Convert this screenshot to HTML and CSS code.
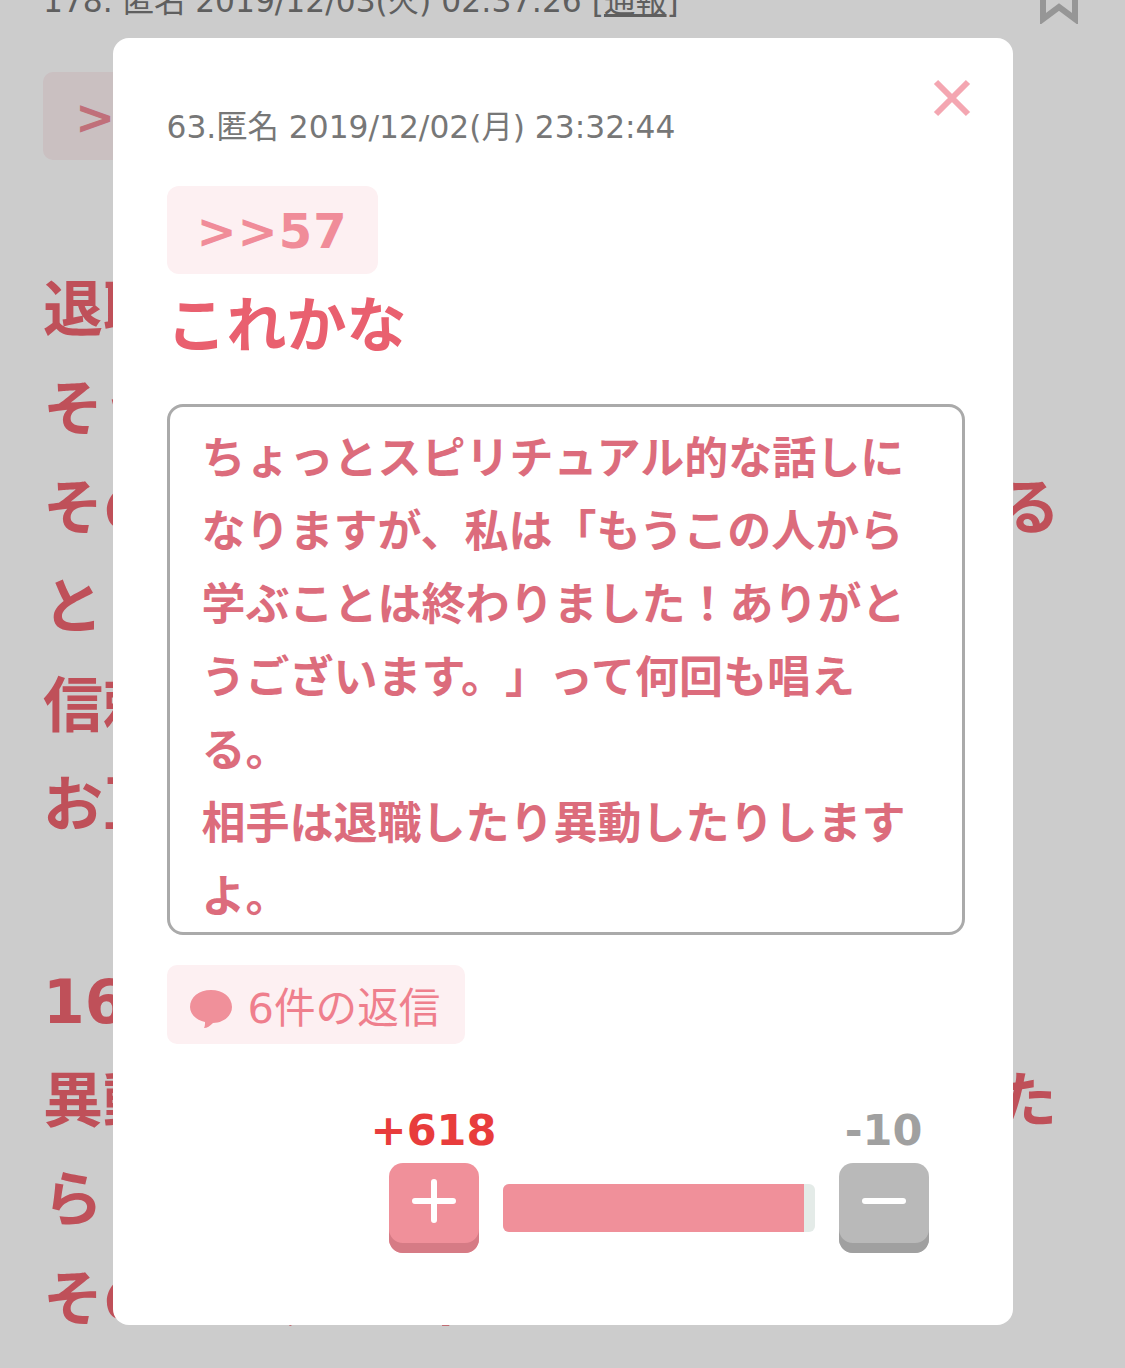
FILE: index.html
```html
<!DOCTYPE html>
<html lang="ja">
<head>
    <meta charset="UTF-8">
    <meta name="viewport" content="width=device-width, initial-scale=1.0">
    <title>コメント</title>
    <link rel="stylesheet" href="styles.css">
</head>
<body>

<div class="thread">
    <div class="thread-meta">
        <span>178. 匿名 2019/12/03(火) 02:37:26 [<u>通報</u>]</span>
        <svg class="bookmark" viewBox="0 0 38 28" width="38" height="28">
            <path d="M3 -6V23L19 11L35 23V-6" fill="none" stroke="#bcbcbc" stroke-width="6"/>
        </svg>
    </div>
    <div class="thread-quote">&gt;&gt;63</div>
    <div class="thread-body">
        <p>退職する人に対しては</p>
        <p>そういう気持ちになります</p>
        <p>その人のことは考えないようにしてる</p>
        <p>と</p>
        <p>信頼できる人に話します</p>
        <p>お互いに</p>
        <p>&nbsp;</p>
        <p>164.</p>
        <p>異動するまでの辛抱だと思ってました</p>
        <p>ら</p>
        <p>その人が先に辞めました</p>
    </div>
</div>

<div class="overlay">
    <div class="modal">
        <svg class="modal-close" viewBox="0 0 38 38" width="38" height="38">
            <path d="M3 3L35 35M35 3L3 35" stroke="#f4a6b1" stroke-width="6" fill="none"/>
        </svg>
        <div class="modal-meta">63.匿名 2019/12/02(月) 23:32:44</div>
        <div class="anchor">&gt;&gt;57</div>
        <div class="comment">これかな</div>
        <div class="quote-box">ちょっとスピリチュアル的な話しになりますが、私は「もうこの人から学ぶことは終わりました！ありがとうございます。」って何回も唱える。<br>相手は退職したり異動したりしますよ。</div>
        <div class="reply-chip">
            <svg class="bubble" viewBox="0 0 42 38" width="42" height="38">
                <path d="M21 0C33 0 42 7 42 17C42 26 33 33 23 33C20 36 17 38 14 38C15 36 15 34 15 32C6 30 0 24 0 17C0 7 9 0 21 0Z" fill="#f0909a"/>
            </svg>
            <span>6件の返信</span>
        </div>
        <div class="vote">
            <div class="vote-side">
                <div class="vote-count vote-count-plus">+618</div>
                <div class="vote-btn vote-btn-plus">
                    <svg viewBox="0 0 46 46" width="46" height="46">
                        <path d="M23 4V42M4 23H42" stroke="#fff" stroke-width="6" stroke-linecap="round"/>
                    </svg>
                </div>
            </div>
            <div class="vote-bar"><div class="vote-fill" style="width: 96.5%"></div></div>
            <div class="vote-side">
                <div class="vote-count vote-count-minus">-10</div>
                <div class="vote-btn vote-btn-minus">
                    <svg viewBox="0 0 46 46" width="46" height="46">
                        <path d="M4 23H42" stroke="#fff" stroke-width="6" stroke-linecap="round"/>
                    </svg>
                </div>
            </div>
        </div>
    </div>
</div>

</body>
</html>
```

FILE: styles.css
```css
html, body {
    margin: 0;
    height: 1368px;
    overflow: hidden;
    background-color: #fff;
}
body {
    font-family: "DejaVu Sans", "Noto Sans CJK JP", sans-serif;
}
.thread {
    padding: 0 43px;
    margin-top: -17px;
}
.thread-meta {
    display: flex;
    justify-content: space-between;
    height: 89px;
    font-size: 31.3px;
    line-height: 36px;
    color: #777;
}
.bookmark {
    margin: 13px 4px 0 0;
}
.thread-quote {
    width: 300px;
    height: 88px;
    box-sizing: border-box;
    padding-left: 32px;
    font-size: 48px;
    font-weight: bold;
    line-height: 90px;
    color: #f08c99;
    background-color: #fdf0f2;
    border-radius: 10px;
}
.thread-body {
    margin-top: 101px;
    font-size: 60px;
    font-weight: bold;
    line-height: 98.9px;
    color: #ef6470;
    white-space: nowrap;
}
.thread-body p {
    margin: 0;
}
.overlay {
    position: fixed;
    inset: 0;
    display: flex;
    justify-content: center;
    align-items: flex-start;
    padding-top: 38px;
    background-color: rgba(0, 0, 0, 0.2);
}
.modal {
    position: relative;
    width: 900px;
    height: 1287px;
    box-sizing: border-box;
    padding: 71px 48px 0 54px;
    background-color: #fff;
    border-radius: 16px;
}
.modal-close {
    position: absolute;
    top: 41px;
    right: 42px;
}
.modal-meta {
    font-size: 31.3px;
    line-height: 36px;
    color: #777;
}
.anchor {
    width: 211px;
    height: 88px;
    margin-top: 41px;
    font-size: 48px;
    font-weight: bold;
    line-height: 90px;
    letter-spacing: 1px;
    text-align: center;
    color: #f08c99;
    background-color: #fdf0f2;
    border-radius: 12px;
}
.comment {
    margin-top: 12px;
    font-size: 60px;
    font-weight: bold;
    line-height: 80px;
    color: #e9606f;
}
.quote-box {
    box-sizing: border-box;
    height: 531px;
    margin-top: 38px;
    padding: 15px 30px 0 32px;
    font-size: 44px;
    font-weight: bold;
    line-height: 73px;
    text-spacing-trim: space-all;
    color: #dc6c7c;
    border: 3px solid #aaa;
    border-radius: 16px;
}
.reply-chip {
    display: inline-flex;
    align-items: center;
    gap: 16px;
    height: 79px;
    margin-top: 30px;
    padding: 0 25px 0 23px;
    font-size: 41.6px;
    color: #ef7f8d;
    background-color: #fdf0f2;
    border-radius: 10px;
}
.bubble {
    margin-top: 8px;
}
.vote {
    display: flex;
    align-items: flex-end;
    gap: 24px;
    margin: 58px 36px 0 222px;
}
.vote-side {
    width: 90px;
    display: flex;
    flex-direction: column;
    align-items: center;
}
.vote-count {
    font-size: 43px;
    font-weight: bold;
    line-height: 56px;
    white-space: nowrap;
    margin-bottom: 5px;
}
.vote-count-plus {
    color: #e83c3c;
}
.vote-count-minus {
    color: #a0a0a0;
}
.vote-btn {
    width: 90px;
    height: 90px;
    display: flex;
    align-items: center;
    justify-content: center;
    box-sizing: border-box;
    padding-bottom: 14px;
    border-radius: 14px;
}
.vote-btn-plus {
    background-color: #f0909a;
    box-shadow: inset 0 -10px 0 #d67b85;
}
.vote-btn-minus {
    background-color: #b9b9b9;
    box-shadow: inset 0 -10px 0 #a0a0a0;
}
.vote-bar {
    flex: 1;
    height: 48px;
    margin-bottom: 21px;
    background-color: #e4ebe8;
    border-radius: 6px;
    overflow: hidden;
}
.vote-fill {
    height: 100%;
    background-color: #f0909a;
}
```
